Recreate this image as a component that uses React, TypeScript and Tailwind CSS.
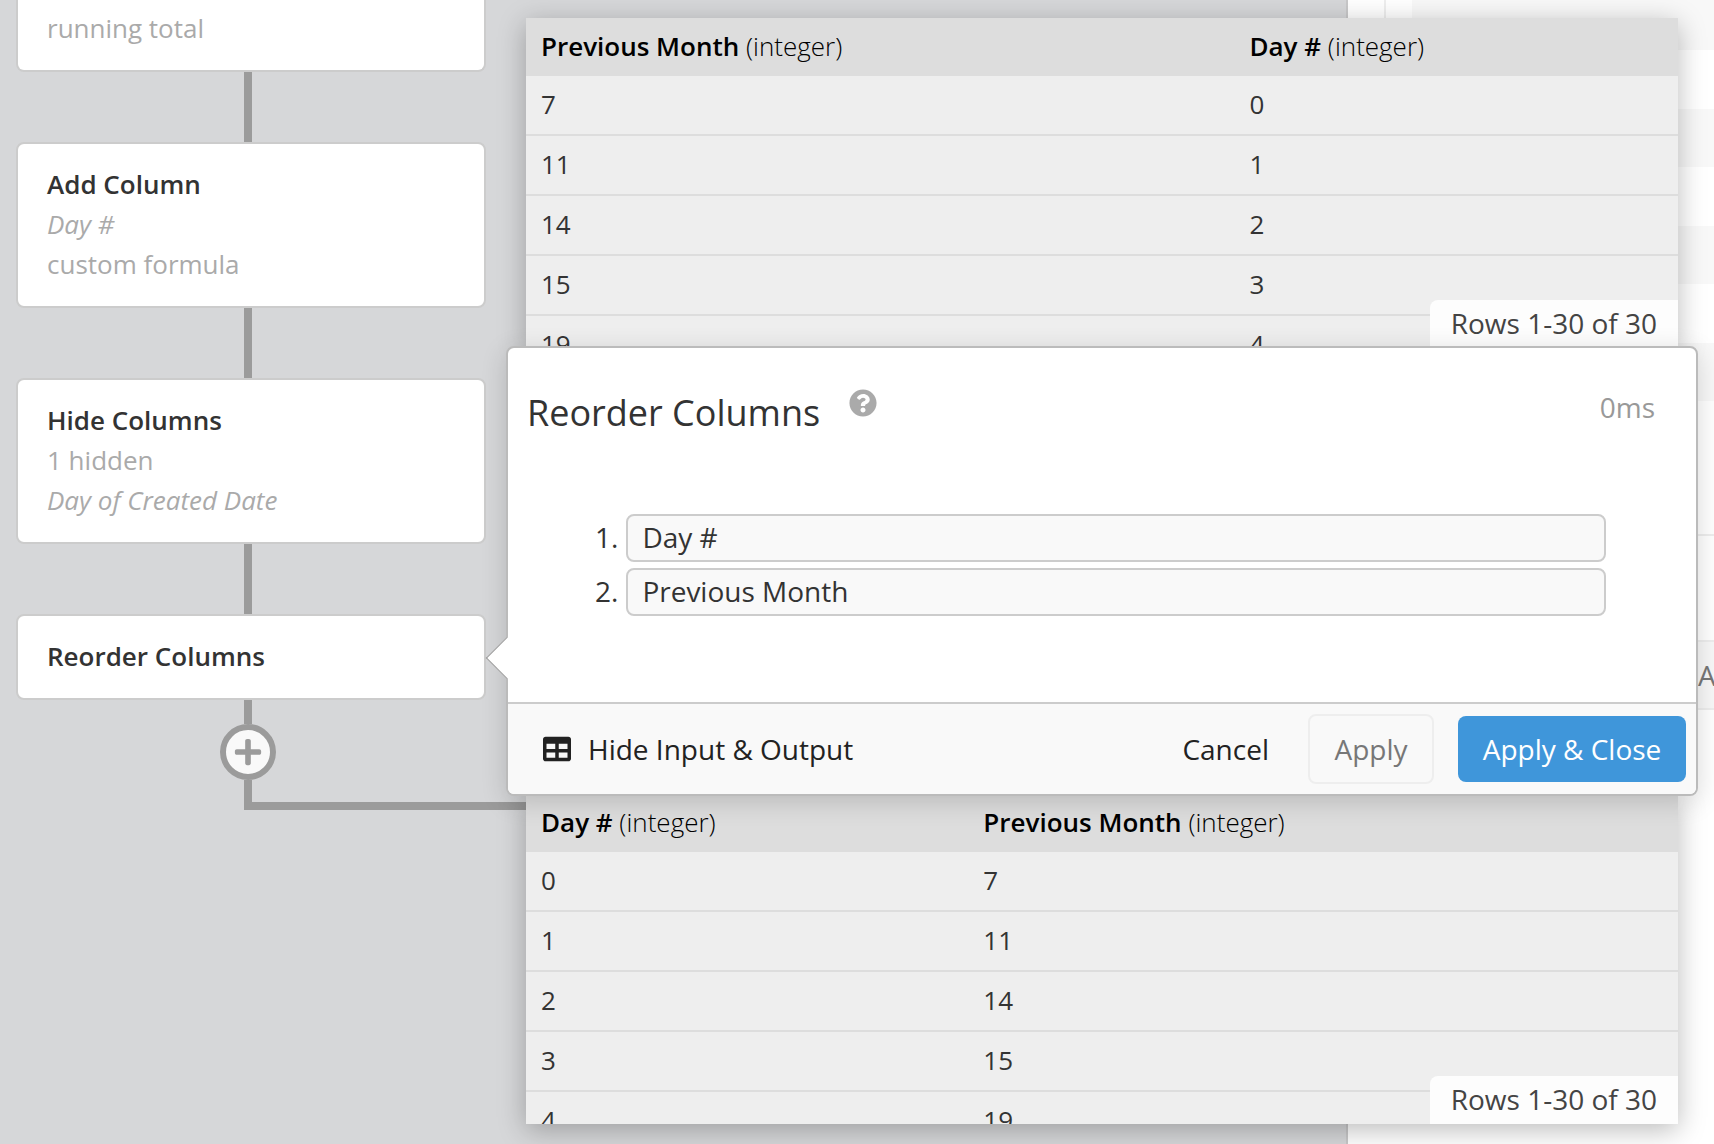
import { useState } from "react";
import { FaPlus, FaQuestionCircle, FaTable } from "react-icons/fa";

interface Step {
    title: string;
    details: { text: string; italic?: boolean }[];
}

interface PreviewTableProps {
    label: string;
    columns: { name: string; type: string; width: string }[];
    rows: number[][];
}

const steps: Step[] = [
    { title: "Add Column", details: [{ text: "Day #", italic: true }, { text: "custom formula" }] },
    { title: "Hide Columns", details: [{ text: "1 hidden" }, { text: "Day of Created Date", italic: true }] },
    { title: "Reorder Columns", details: [] },
];

const previousMonth = [7, 11, 14, 15, 19];

function Connector() {
    return <div className="ml-[228px] h-[70px] w-2 bg-[#9b9b9b]" />;
}

function PreviewTable({ label, columns, rows }: PreviewTableProps) {
    return (
        <div className="relative mx-5 h-[330px] overflow-hidden bg-[#eeeeee] shadow-[0_6px_26px_rgba(0,0,0,0.27)]">
            <table
                aria-label={label}
                className="w-full table-fixed border-separate border-spacing-0 text-left text-[26px] leading-[36px] text-[#333333]"
            >
                <thead className="bg-[#dddddd] text-black">
                    <tr className="h-[58px]">
                        {columns.map(col => (
                            <th key={col.name} className={`px-[15px] pb-[2px] font-light ${col.width}`}>
                                <span className="font-semibold">{col.name}</span> ({col.type})
                            </th>
                        ))}
                    </tr>
                </thead>
                <tbody>
                    {rows.map((row, i) => (
                        <tr key={i} className="h-[60px]">
                            {row.map((value, j) => (
                                <td key={j} className="border-b-2 border-[#dddddd] px-[15px] pb-[2px]">{value}</td>
                            ))}
                        </tr>
                    ))}
                </tbody>
            </table>
            <div className="absolute right-0 bottom-0 h-12 rounded-tl-lg bg-[#fdfdfd] px-[21px] text-[28px] leading-[46px] text-[#444444]">
                Rows 1-30 of 30
            </div>
        </div>
    );
}

export default function App() {
    const [columns, setColumns] = useState(["Day #", "Previous Month"]);

    return (
        <div className="relative flex h-screen overflow-hidden bg-white font-['Open_Sans',sans-serif] text-[#333333]">
            {/* Pipeline */}
            <div className="w-[1348px] shrink-0 border-r-2 border-[#c8c8c9] bg-[#d6d7d9] pl-4">
                <div className="h-[72px] w-[470px] rounded-b-lg border-2 border-t-0 border-[#cccccc] bg-white px-[29px] pt-2 text-[26px] leading-10 text-[#aaaaaa]">
                    running total
                </div>
                {steps.map(step => (
                    <div key={step.title}>
                        <Connector />
                        <div className="w-[470px] rounded-lg border-2 border-[#cccccc] bg-white px-[29px] pt-5 pb-[22px] text-[26px] leading-10 text-[#aaaaaa]">
                            <h3 className="font-semibold text-[#333333]">{step.title}</h3>
                            {step.details.map(d => (
                                <p key={d.text} className={d.italic ? "italic" : ""}>{d.text}</p>
                            ))}
                        </div>
                    </div>
                ))}
                <div className="ml-[204px] flex w-[56px] flex-col items-center">
                    <div className="h-6 w-2 bg-[#9b9b9b]" />
                    <button
                        aria-label="Add step"
                        className="flex size-[56px] items-center justify-center rounded-full border-[6px] border-[#9b9b9b] bg-[#f9f9f9] text-[#9b9b9b]"
                    >
                        <FaPlus size={30} />
                    </button>
                </div>
                <div className="ml-[228px] h-[30px] w-[320px] border-b-8 border-l-8 border-[#9b9b9b]" />
            </div>

            {/* Chart settings behind the dialog */}
            <div className="flex flex-1 flex-col">
                <div className="ml-9 flex h-[534px] flex-col border-l-2 border-[#eeeeee] pl-[26px]">
                    <div className="h-[50px] bg-[#f8f8f8]" />
                    {[0, 1, 2].map(i => (
                        <div key={i} className="mt-[59px] h-[58px] bg-[#f8f8f8]" />
                    ))}
                </div>
                <div className="h-[106px] border-t-2 border-[#eeeeee]" />
                <div className="h-[70px] border-y-2 border-[#eeeeee] bg-[#f8f8f8] pl-[350px] text-[28px] leading-[66px] text-[#777777]">
                    A
                </div>
            </div>

            {/* Step editor with its input and output */}
            <div className="absolute top-[18px] right-4 left-[506px] flex flex-col">
                <PreviewTable
                    label="Input"
                    columns={[
                        { name: "Previous Month", type: "integer", width: "w-[61.5%]" },
                        { name: "Day #", type: "integer", width: "w-[38.5%]" },
                    ]}
                    rows={previousMonth.map((value, day) => [value, day])}
                />
                <section className="relative z-10 -my-[2px] rounded-lg border-2 border-[#bbbbbb] bg-white shadow-[0_6px_26px_rgba(0,0,0,0.16)]">
                    <div className="absolute top-[295px] -left-4 size-[30px] rotate-45 border-b border-l border-[#999999] bg-white" />
                    <div className="relative flex h-[354px] flex-col">
                        <div className="flex items-start pt-[37px] pr-[41px] pl-[19px]">
                            <h2 className="text-[36px] leading-[56px]">Reorder Columns</h2>
                            <button aria-label="Help" className="mt-1 ml-[29px] text-[#aaaaaa]">
                                <FaQuestionCircle size={28} />
                            </button>
                            <span className="ml-auto text-[28px] leading-[44px] text-[#999999]">0ms</span>
                        </div>
                        <ol className="mt-[73px] flex flex-col gap-[6px] pr-[90px] pl-[87px] text-[28px]">
                            {columns.map((col, i) => (
                                <li key={i} className="flex items-center gap-2">
                                    <label htmlFor={`column-${i}`} className="shrink-0 pb-[2px]">{i + 1}.</label>
                                    <input
                                        id={`column-${i}`}
                                        value={col}
                                        onChange={e => setColumns(columns.map((c, j) => (j === i ? e.target.value : c)))}
                                        className="h-12 min-w-0 flex-1 rounded-lg border-2 border-[#cccccc] bg-[#f9f9f9] px-[14px] pb-[2px]"
                                    />
                                </li>
                            ))}
                        </ol>
                    </div>
                    <div className="relative flex h-[92px] items-center rounded-b-md border-t-2 border-[#cccccc] bg-[#f9f9f9] pr-[10px] pl-[35px] text-[28px] text-[#222222]">
                        <button className="flex items-center gap-[17px]">
                            <FaTable size={28} />
                            Hide Input &amp; Output
                        </button>
                        <button className="mr-[39px] ml-auto">Cancel</button>
                        <button className="mr-6 h-[70px] w-[126px] rounded-lg border-2 border-[#eeeeee] text-[#777777]">Apply</button>
                        <button className="h-[66px] w-[228px] rounded-lg bg-[#3f96da] text-white">Apply &amp; Close</button>
                    </div>
                </section>
                <PreviewTable
                    label="Output"
                    columns={[
                        { name: "Day #", type: "integer", width: "w-[38.4%]" },
                        { name: "Previous Month", type: "integer", width: "w-[61.6%]" },
                    ]}
                    rows={previousMonth.map((value, day) => [day, value])}
                />
            </div>
        </div>
    );
}
